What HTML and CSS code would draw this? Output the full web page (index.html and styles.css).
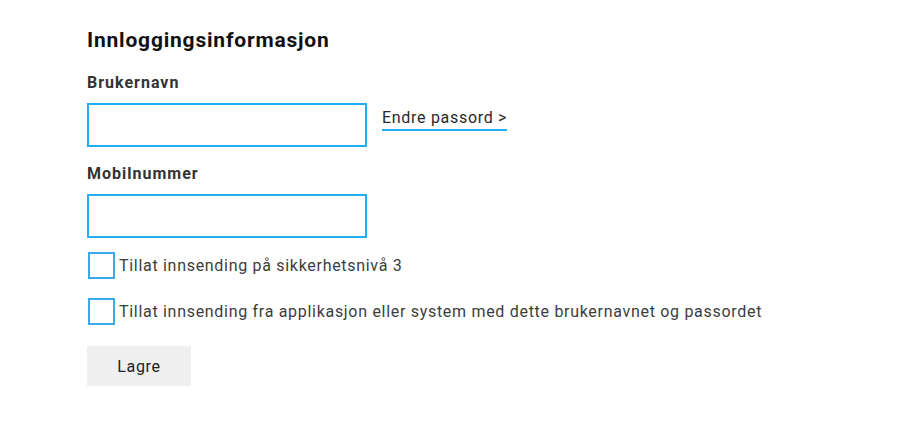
FILE: index.html
```html
<!DOCTYPE html>
<html lang="no">
<head>
<meta charset="utf-8">
<title>Innloggingsinformasjon</title>
<link rel="stylesheet" href="styles.css">
</head>
<body>
<main class="page">
  <h2 class="title">Innloggingsinformasjon</h2>
  <form class="form">
    <div class="field">
      <label class="label" for="user">Brukernavn</label>
      <div class="row">
        <input class="input" id="user" type="text">
        <a class="link" href="#">Endre passord &gt;</a>
      </div>
    </div>
    <div class="field">
      <label class="label" for="mobile">Mobilnummer</label>
      <input class="input" id="mobile" type="text">
    </div>
    <label class="check">
      <span class="box"></span>
      <span class="check-text">Tillat innsending på sikkerhetsnivå 3</span>
    </label>
    <label class="check">
      <span class="box"></span>
      <span class="check-text">Tillat innsending fra applikasjon eller system med dette brukernavnet og passordet</span>
    </label>
    <button class="btn" type="button">Lagre</button>
  </form>
</main>
</body>
</html>
```
FILE: styles.css
```css
* { box-sizing: border-box; }
html, body { margin: 0; padding: 0; background: #fff; }
body {
  font-family: Roboto, "Liberation Sans", sans-serif;
  color: #2a2a2a;
}
.page {
  padding: 26px 0 0 87px;
}
.title {
  margin: 0;
  font-size: 21px;
  font-weight: 700;
  line-height: 28px;
  letter-spacing: 0.8px;
  color: #111;
}
.form {
  display: flex;
  flex-direction: column;
  margin-top: 19px;
}
.field {
  display: flex;
  flex-direction: column;
}
.field + .field { margin-top: 17px; }
.label {
  font-size: 16px;
  font-weight: 700;
  line-height: 20px;
  letter-spacing: 1px;
  color: #333;
  margin-bottom: 10px;
}
.row {
  display: flex;
  align-items: flex-start;
}
.input {
  width: 280px;
  height: 44px;
  border: 2px solid #20aef5;
  outline: none;
  margin: 0;
  padding: 0 8px;
  font: inherit;
}
.link {
  margin-left: 15px;
  margin-top: 5px;
  font-size: 16px;
  letter-spacing: 0.7px;
  color: #2a2a2a;
  text-decoration: none;
  border-bottom: 2px solid #20aef5;
  padding-bottom: 1px;
  line-height: 20px;
}
.check {
  display: flex;
  align-items: center;
  gap: 4px;
  font-size: 16px;
  letter-spacing: 0.7px;
  color: #3d3d3d;
  margin-top: 14px;
}
.check + .check { margin-top: 19px; }
.box {
  width: 27px;
  height: 27px;
  border: 2px solid #3aabea;
  flex: none;
  margin-left: 1px;
}
.btn {
  align-self: flex-start;
  margin-top: 21px;
  width: 104px;
  height: 40px;
  border: none;
  background: #efefef;
  font-family: inherit;
  font-size: 16px;
  letter-spacing: 0.7px;
  color: #222;
  padding: 0;
}
```
